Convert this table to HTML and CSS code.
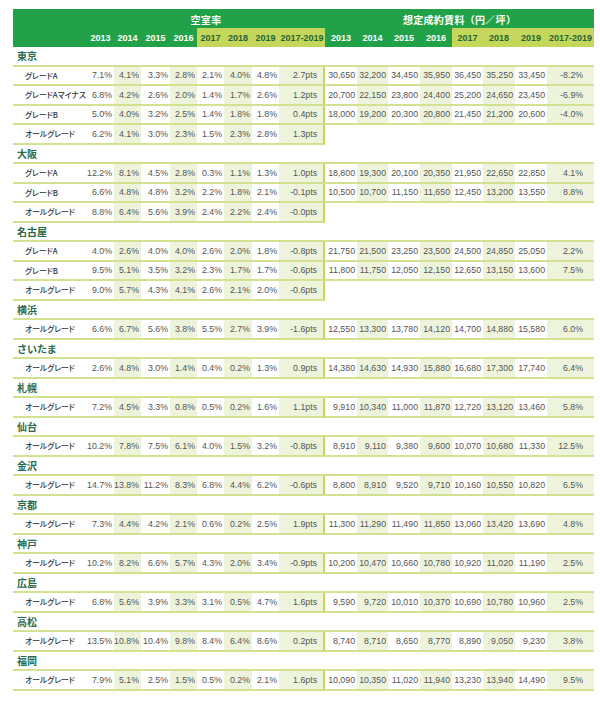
FILE: index.html
```html
<!DOCTYPE html>
<html lang="ja">
<head>
<meta charset="utf-8">
<link rel="stylesheet" href="styles.css">
</head>
<body>
<table class="tbl">
<colgroup>
<col style="width:74px"><col style="width:27px"><col style="width:27px"><col style="width:29px"><col style="width:27px"><col style="width:27px"><col style="width:28px"><col style="width:27px"><col style="width:46px"><col style="width:32px"><col style="width:31px"><col style="width:32px"><col style="width:32px"><col style="width:31px"><col style="width:32px"><col style="width:32px"><col style="width:47px">
</colgroup>
<thead>
<tr class="h1"><th></th><th colspan="8">空室率</th><th colspan="8">想定成約賃料（円／坪）</th></tr>
<tr class="h2"><th></th><th>2013</th><th>2014</th><th>2015</th><th>2016</th><th>2017</th><th>2018</th><th>2019</th><th>2017-2019</th><th>2013</th><th>2014</th><th>2015</th><th>2016</th><th>2017</th><th>2018</th><th>2019</th><th>2017-2019</th></tr>
</thead>
<tbody>
<tr class="city"><td colspan="17">東京</td></tr>
<tr class="d"><td>グレードA</td><td>7.1%</td><td>4.1%</td><td>3.3%</td><td>2.8%</td><td>2.1%</td><td>4.0%</td><td>4.8%</td><td>2.7pts</td><td>30,650</td><td>32,200</td><td>34,450</td><td>35,950</td><td>36,450</td><td>35,250</td><td>33,450</td><td>-8.2%</td></tr>
<tr class="d"><td>グレードAマイナス</td><td>6.8%</td><td>4.2%</td><td>2.6%</td><td>2.0%</td><td>1.4%</td><td>1.7%</td><td>2.6%</td><td>1.2pts</td><td>20,700</td><td>22,150</td><td>23,800</td><td>24,400</td><td>25,200</td><td>24,650</td><td>23,450</td><td>-6.9%</td></tr>
<tr class="d"><td>グレードB</td><td>5.0%</td><td>4.0%</td><td>3.2%</td><td>2.5%</td><td>1.4%</td><td>1.8%</td><td>1.8%</td><td>0.4pts</td><td>18,000</td><td>19,200</td><td>20,300</td><td>20,800</td><td>21,450</td><td>21,200</td><td>20,600</td><td>-4.0%</td></tr>
<tr class="d"><td>オールグレード</td><td>6.2%</td><td>4.1%</td><td>3.0%</td><td>2.3%</td><td>1.5%</td><td>2.3%</td><td>2.8%</td><td>1.3pts</td></tr>
<tr class="city"><td colspan="17">大阪</td></tr>
<tr class="d"><td>グレードA</td><td>12.2%</td><td>8.1%</td><td>4.5%</td><td>2.8%</td><td>0.3%</td><td>1.1%</td><td>1.3%</td><td>1.0pts</td><td>18,800</td><td>19,300</td><td>20,100</td><td>20,350</td><td>21,950</td><td>22,650</td><td>22,850</td><td>4.1%</td></tr>
<tr class="d"><td>グレードB</td><td>6.6%</td><td>4.8%</td><td>4.8%</td><td>3.2%</td><td>2.2%</td><td>1.8%</td><td>2.1%</td><td>-0.1pts</td><td>10,500</td><td>10,700</td><td>11,150</td><td>11,650</td><td>12,450</td><td>13,200</td><td>13,550</td><td>8.8%</td></tr>
<tr class="d"><td>オールグレード</td><td>8.8%</td><td>6.4%</td><td>5.6%</td><td>3.9%</td><td>2.4%</td><td>2.2%</td><td>2.4%</td><td>-0.0pts</td></tr>
<tr class="city"><td colspan="17">名古屋</td></tr>
<tr class="d"><td>グレードA</td><td>4.0%</td><td>2.6%</td><td>4.0%</td><td>4.0%</td><td>2.6%</td><td>2.0%</td><td>1.8%</td><td>-0.8pts</td><td>21,750</td><td>21,500</td><td>23,250</td><td>23,500</td><td>24,500</td><td>24,850</td><td>25,050</td><td>2.2%</td></tr>
<tr class="d"><td>グレードB</td><td>9.5%</td><td>5.1%</td><td>3.5%</td><td>3.2%</td><td>2.3%</td><td>1.7%</td><td>1.7%</td><td>-0.6pts</td><td>11,800</td><td>11,750</td><td>12,050</td><td>12,150</td><td>12,650</td><td>13,150</td><td>13,600</td><td>7.5%</td></tr>
<tr class="d"><td>オールグレード</td><td>9.0%</td><td>5.7%</td><td>4.3%</td><td>4.1%</td><td>2.6%</td><td>2.1%</td><td>2.0%</td><td>-0.6pts</td></tr>
<tr class="city"><td colspan="17">横浜</td></tr>
<tr class="d"><td>オールグレード</td><td>6.6%</td><td>6.7%</td><td>5.6%</td><td>3.8%</td><td>5.5%</td><td>2.7%</td><td>3.9%</td><td>-1.6pts</td><td>12,550</td><td>13,300</td><td>13,780</td><td>14,120</td><td>14,700</td><td>14,880</td><td>15,580</td><td>6.0%</td></tr>
<tr class="city"><td colspan="17">さいたま</td></tr>
<tr class="d"><td>オールグレード</td><td>2.6%</td><td>4.8%</td><td>3.0%</td><td>1.4%</td><td>0.4%</td><td>0.2%</td><td>1.3%</td><td>0.9pts</td><td>14,380</td><td>14,630</td><td>14,930</td><td>15,880</td><td>16,680</td><td>17,300</td><td>17,740</td><td>6.4%</td></tr>
<tr class="city"><td colspan="17">札幌</td></tr>
<tr class="d"><td>オールグレード</td><td>7.2%</td><td>4.5%</td><td>3.3%</td><td>0.8%</td><td>0.5%</td><td>0.2%</td><td>1.6%</td><td>1.1pts</td><td>9,910</td><td>10,340</td><td>11,000</td><td>11,870</td><td>12,720</td><td>13,120</td><td>13,460</td><td>5.8%</td></tr>
<tr class="city"><td colspan="17">仙台</td></tr>
<tr class="d"><td>オールグレード</td><td>10.2%</td><td>7.8%</td><td>7.5%</td><td>6.1%</td><td>4.0%</td><td>1.5%</td><td>3.2%</td><td>-0.8pts</td><td>8,910</td><td>9,110</td><td>9,380</td><td>9,600</td><td>10,070</td><td>10,680</td><td>11,330</td><td>12.5%</td></tr>
<tr class="city"><td colspan="17">金沢</td></tr>
<tr class="d"><td>オールグレード</td><td>14.7%</td><td>13.8%</td><td>11.2%</td><td>8.3%</td><td>6.8%</td><td>4.4%</td><td>6.2%</td><td>-0.6pts</td><td>8,800</td><td>8,910</td><td>9,520</td><td>9,710</td><td>10,160</td><td>10,550</td><td>10,820</td><td>6.5%</td></tr>
<tr class="city"><td colspan="17">京都</td></tr>
<tr class="d"><td>オールグレード</td><td>7.3%</td><td>4.4%</td><td>4.2%</td><td>2.1%</td><td>0.6%</td><td>0.2%</td><td>2.5%</td><td>1.9pts</td><td>11,300</td><td>11,290</td><td>11,490</td><td>11,850</td><td>13,060</td><td>13,420</td><td>13,690</td><td>4.8%</td></tr>
<tr class="city"><td colspan="17">神戸</td></tr>
<tr class="d"><td>オールグレード</td><td>10.2%</td><td>8.2%</td><td>6.6%</td><td>5.7%</td><td>4.3%</td><td>2.0%</td><td>3.4%</td><td>-0.9pts</td><td>10,200</td><td>10,470</td><td>10,660</td><td>10,780</td><td>10,920</td><td>11,020</td><td>11,190</td><td>2.5%</td></tr>
<tr class="city"><td colspan="17">広島</td></tr>
<tr class="d"><td>オールグレード</td><td>6.8%</td><td>5.6%</td><td>3.9%</td><td>3.3%</td><td>3.1%</td><td>0.5%</td><td>4.7%</td><td>1.6pts</td><td>9,590</td><td>9,720</td><td>10,010</td><td>10,370</td><td>10,690</td><td>10,780</td><td>10,960</td><td>2.5%</td></tr>
<tr class="city"><td colspan="17">高松</td></tr>
<tr class="d"><td>オールグレード</td><td>13.5%</td><td>10.8%</td><td>10.4%</td><td>9.8%</td><td>8.4%</td><td>6.4%</td><td>8.6%</td><td>0.2pts</td><td>8,740</td><td>8,710</td><td>8,650</td><td>8,770</td><td>8,890</td><td>9,050</td><td>9,230</td><td>3.8%</td></tr>
<tr class="city"><td colspan="17">福岡</td></tr>
<tr class="d"><td>オールグレード</td><td>7.9%</td><td>5.1%</td><td>2.5%</td><td>1.5%</td><td>0.5%</td><td>0.2%</td><td>2.1%</td><td>1.6pts</td><td>10,090</td><td>10,350</td><td>11,020</td><td>11,940</td><td>13,230</td><td>13,940</td><td>14,490</td><td>9.5%</td></tr>
</tbody>
</table>
</body>
</html>
```

FILE: styles.css
```css
html, body {
  margin: 0;
  padding: 0;
  background: #ffffff;
}
body {
  padding: 9px 0 0 13px;
  font-family: "Liberation Sans", "Noto Sans CJK JP", sans-serif;
}
.tbl {
  width: 581px;
  table-layout: fixed;
  border-collapse: separate;
  border-spacing: 0;
}
.tbl th, .tbl td {
  padding: 0;
  margin: 0;
  white-space: nowrap;
  overflow: visible;
  box-sizing: border-box;
}
.h1, .h2 {
  height: 19px;
}
.h1 th {
  background: #21a249;
  color: #ffffff;
  font-family: "Noto Sans CJK JP", sans-serif;
  font-size: 10px;
  font-weight: 700;
  text-align: center;
  vertical-align: middle;
  padding-top: 2px;
  letter-spacing: 0.3px;
}
.h2 th {
  background: #21a249;
  color: #ffffff;
  font-size: 9px;
  font-weight: 700;
  text-align: center;
  vertical-align: middle;
}
.h2 th:nth-child(n+6):nth-child(-n+9),
.h2 th:nth-child(n+14) {
  background: #c4d75a;
  color: #23643a;
}
.city {
  height: 19.5px;
}
.city td {
  font-family: "Noto Sans CJK JP", sans-serif;
  font-size: 10px;
  font-weight: 700;
  color: #2b6a4c;
  padding-left: 4px;
  vertical-align: middle;
  border-bottom: 2px solid #d3e291;
}
.d {
  height: 19.5px;
}
.d td {
  font-size: 8.8px;
  color: #555555;
  text-align: right;
  vertical-align: middle;
  padding-right: 2px;
  border-bottom: 2px solid #d3e291;
}
.d td:first-child {
  font-family: "Noto Sans CJK JP", sans-serif;
  font-size: 7.8px;
  font-weight: 500;
  font-feature-settings: "palt";
  color: #333333;
  text-align: left;
  padding-left: 12px;
}
.d td:nth-child(3),
.d td:nth-child(5),
.d td:nth-child(7),
.d td:nth-child(9),
.d td:nth-child(11),
.d td:nth-child(13),
.d td:nth-child(15),
.d td:nth-child(17) {
  background: #eef4dc;
}
.d td:nth-child(9) {
  border-right: 2px solid #c4d75a;
  padding-right: 6px;
}
.d td:nth-child(17) {
  padding-right: 11px;
}
```
